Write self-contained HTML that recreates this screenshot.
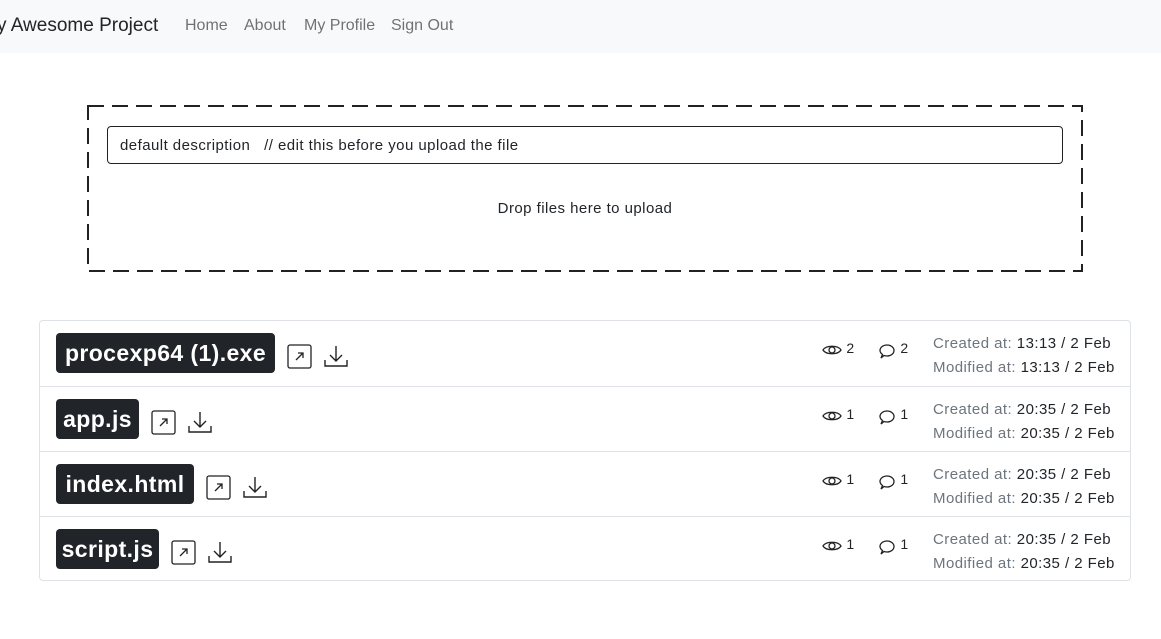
<!DOCTYPE html>
<html><head><meta charset="utf-8"><style>
*{box-sizing:border-box;margin:0;padding:0}
body{width:1161px;height:639px;overflow:hidden;background:#fff;font-family:"Liberation Sans",sans-serif;color:#212529;position:relative;letter-spacing:.45px}
.nav{position:absolute;left:0;top:0;width:1161px;height:53px;background:#f8f9fa;letter-spacing:0}
.brand{position:absolute;left:-3px;top:15px;font-size:19px;color:#212529;white-space:nowrap}
.link{position:absolute;top:17px;font-size:16px;color:rgba(0,0,0,.55)}
.dz{position:absolute;left:87px;top:105px}
.inp{position:absolute;left:107px;top:126px;width:956px;height:38px;border:1px solid #222;border-radius:4px;font-size:15px;padding:10px 12px;white-space:pre}
.drop{position:absolute;left:87px;width:996px;top:200px;text-align:center;font-size:15px}
.list{position:absolute;left:39px;top:320px;width:1092px;height:261px;border:1px solid #dee2e6;border-radius:4px}
.row{position:absolute;left:0;width:1090px;height:65px;border-top:1px solid #dee2e6}
.row:first-child{border-top:none}
.badge{position:absolute;left:16px;top:12px;height:40px;background:#212529;color:#fff;font-weight:bold;font-size:23px;line-height:40px;border-radius:4px;text-align:center;letter-spacing:.4px}
.ic{position:absolute;top:23px}
.eye{position:absolute;left:782px;top:22px;font-size:14px}
.cm{position:absolute;left:838px;top:22px;font-size:14px}
.dt{position:absolute;left:893px;top:11px;font-size:15px;line-height:24px;color:#6c757d;white-space:nowrap}
.dt b{font-weight:normal;color:#212529}
</style></head><body>
<div class="nav">
<div class="brand">y Awesome Project</div>
<div class="link" style="left:185px">Home</div>
<div class="link" style="left:244px">About</div>
<div class="link" style="left:304px">My Profile</div>
<div class="link" style="left:391px">Sign Out</div>
</div>
<svg class="dz" width="996" height="167"><rect x="1" y="1" width="994" height="165" fill="none" stroke="#222" stroke-width="2" stroke-dasharray="16,8"/></svg>
<div class="inp">default description   // edit this before you upload the file</div>
<div class="drop">Drop files here to upload</div>
<div class="list">
<div class="row" style="top:0"><div class="badge" style="width:219px">procexp64 (1).exe</div>
<svg class="ic" style="left:247px" width="25" height="25" viewBox="0 0 25 25"><rect x="1" y="1" width="23" height="23" rx="2" fill="none" stroke="#222" stroke-width="1.3"/><path d="M9 16L16 9M11 9h5v5" fill="none" stroke="#222" stroke-width="1.3"/></svg>
<svg class="ic" style="left:283px;top:22px" width="26" height="26" viewBox="0 0 26 26"><path d="M13 3v15M7 12l6 6 6-6M2 17v6h22v-6" fill="none" stroke="#222" stroke-width="1.4"/></svg>
<div class="eye"><svg width="20" height="14" viewBox="0 0 20 14" style="vertical-align:-1px"><path d="M1 7C4 2 16 2 19 7C16 12 4 12 1 7Z" fill="none" stroke="#222" stroke-width="1.3"/><circle cx="10" cy="7" r="3" fill="none" stroke="#222" stroke-width="1.3"/></svg> <span style="position:relative;top:-3px">2</span></div>
<div class="cm"><svg width="18" height="17" viewBox="0 0 18 17" style="vertical-align:-4px"><path d="M3 15l1.5-3.5C2.5 10 2 9 2 7.5 2 4.5 5 2 9 2s7 2.5 7 5.5S13 13 9 13c-1 0-2-.2-3-.5Z" fill="none" stroke="#222" stroke-width="1.3"/></svg> <span style="position:relative;top:-3px">2</span></div>
<div class="dt">Created at: <b>13:13 / 2 Feb</b><br>Modified at: <b>13:13 / 2 Feb</b></div></div>

<div class="row" style="top:65px"><div class="badge" style="width:83px">app.js</div>
<svg class="ic" style="left:111px" width="25" height="25" viewBox="0 0 25 25"><rect x="1" y="1" width="23" height="23" rx="2" fill="none" stroke="#222" stroke-width="1.3"/><path d="M9 16L16 9M11 9h5v5" fill="none" stroke="#222" stroke-width="1.3"/></svg>
<svg class="ic" style="left:147px;top:22px" width="26" height="26" viewBox="0 0 26 26"><path d="M13 3v15M7 12l6 6 6-6M2 17v6h22v-6" fill="none" stroke="#222" stroke-width="1.4"/></svg>
<div class="eye"><svg width="20" height="14" viewBox="0 0 20 14" style="vertical-align:-1px"><path d="M1 7C4 2 16 2 19 7C16 12 4 12 1 7Z" fill="none" stroke="#222" stroke-width="1.3"/><circle cx="10" cy="7" r="3" fill="none" stroke="#222" stroke-width="1.3"/></svg> <span style="position:relative;top:-3px">1</span></div>
<div class="cm"><svg width="18" height="17" viewBox="0 0 18 17" style="vertical-align:-4px"><path d="M3 15l1.5-3.5C2.5 10 2 9 2 7.5 2 4.5 5 2 9 2s7 2.5 7 5.5S13 13 9 13c-1 0-2-.2-3-.5Z" fill="none" stroke="#222" stroke-width="1.3"/></svg> <span style="position:relative;top:-3px">1</span></div>
<div class="dt">Created at: <b>20:35 / 2 Feb</b><br>Modified at: <b>20:35 / 2 Feb</b></div></div>

<div class="row" style="top:130px"><div class="badge" style="width:138px">index.html</div>
<svg class="ic" style="left:166px" width="25" height="25" viewBox="0 0 25 25"><rect x="1" y="1" width="23" height="23" rx="2" fill="none" stroke="#222" stroke-width="1.3"/><path d="M9 16L16 9M11 9h5v5" fill="none" stroke="#222" stroke-width="1.3"/></svg>
<svg class="ic" style="left:202px;top:22px" width="26" height="26" viewBox="0 0 26 26"><path d="M13 3v15M7 12l6 6 6-6M2 17v6h22v-6" fill="none" stroke="#222" stroke-width="1.4"/></svg>
<div class="eye"><svg width="20" height="14" viewBox="0 0 20 14" style="vertical-align:-1px"><path d="M1 7C4 2 16 2 19 7C16 12 4 12 1 7Z" fill="none" stroke="#222" stroke-width="1.3"/><circle cx="10" cy="7" r="3" fill="none" stroke="#222" stroke-width="1.3"/></svg> <span style="position:relative;top:-3px">1</span></div>
<div class="cm"><svg width="18" height="17" viewBox="0 0 18 17" style="vertical-align:-4px"><path d="M3 15l1.5-3.5C2.5 10 2 9 2 7.5 2 4.5 5 2 9 2s7 2.5 7 5.5S13 13 9 13c-1 0-2-.2-3-.5Z" fill="none" stroke="#222" stroke-width="1.3"/></svg> <span style="position:relative;top:-3px">1</span></div>
<div class="dt">Created at: <b>20:35 / 2 Feb</b><br>Modified at: <b>20:35 / 2 Feb</b></div></div>

<div class="row" style="top:195px"><div class="badge" style="width:103px">script.js</div>
<svg class="ic" style="left:131px" width="25" height="25" viewBox="0 0 25 25"><rect x="1" y="1" width="23" height="23" rx="2" fill="none" stroke="#222" stroke-width="1.3"/><path d="M9 16L16 9M11 9h5v5" fill="none" stroke="#222" stroke-width="1.3"/></svg>
<svg class="ic" style="left:167px;top:22px" width="26" height="26" viewBox="0 0 26 26"><path d="M13 3v15M7 12l6 6 6-6M2 17v6h22v-6" fill="none" stroke="#222" stroke-width="1.4"/></svg>
<div class="eye"><svg width="20" height="14" viewBox="0 0 20 14" style="vertical-align:-1px"><path d="M1 7C4 2 16 2 19 7C16 12 4 12 1 7Z" fill="none" stroke="#222" stroke-width="1.3"/><circle cx="10" cy="7" r="3" fill="none" stroke="#222" stroke-width="1.3"/></svg> <span style="position:relative;top:-3px">1</span></div>
<div class="cm"><svg width="18" height="17" viewBox="0 0 18 17" style="vertical-align:-4px"><path d="M3 15l1.5-3.5C2.5 10 2 9 2 7.5 2 4.5 5 2 9 2s7 2.5 7 5.5S13 13 9 13c-1 0-2-.2-3-.5Z" fill="none" stroke="#222" stroke-width="1.3"/></svg> <span style="position:relative;top:-3px">1</span></div>
<div class="dt">Created at: <b>20:35 / 2 Feb</b><br>Modified at: <b>20:35 / 2 Feb</b></div></div>
</div>
</body></html>
